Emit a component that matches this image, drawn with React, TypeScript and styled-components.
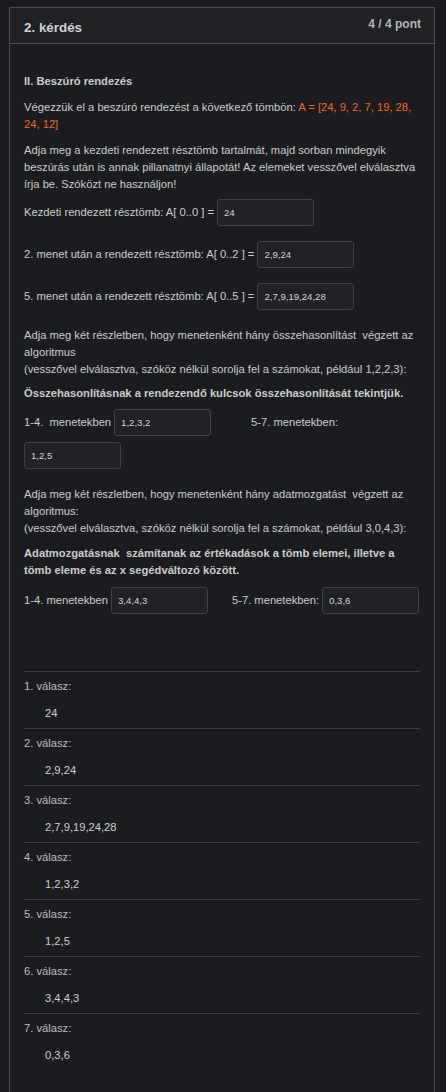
import React from "react";
import styled, { createGlobalStyle } from "styled-components";

const GlobalStyle = createGlobalStyle`
  html, body {
    margin: 0;
    padding: 0;
    background: #1a1b1e;
  }
  body {
    font-family: "Liberation Sans", Arial, sans-serif;
    color: #cccccc;
  }
`;

const Page = styled.div`
  padding: 7px 11px 10px 9px;
`;

const Card = styled.section`
  border: 1px solid #4b4c4f;
  background: #1b1c1f;
`;

const Header = styled.header`
  display: flex;
  justify-content: space-between;
  align-items: flex-start;
  background: #202124;
  border-bottom: 1px solid #4b4c4f;
  height: 36px;
  padding: 0 13px 0 14px;
  box-sizing: border-box;
`;

const Title = styled.h2`
  margin: 12px 0 0;
  font-size: 13.4px;
  line-height: 16px;
  font-weight: 700;
  color: #d2d2d2;
`;

const Points = styled.span`
  margin-top: 9px;
  font-size: 12px;
  line-height: 14px;
  font-weight: 700;
  color: #b4b4b4;
`;

const Body = styled.div`
  padding: 29px 13px 26px 14px;
  font-size: 11.2px;
  line-height: 17px;
`;

const Para = styled.p<{ $bold?: boolean; $mb?: number }>`
  margin: 0 0 ${(p) => (p.$mb ?? 9)}px;
  font-weight: ${(p) => (p.$bold ? 700 : 400)};
`;

const Accent = styled.span`
  color: #f5671c;
`;

const Row = styled.div<{ $mb?: number }>`
  display: flex;
  flex-wrap: wrap;
  align-items: center;
  row-gap: 6px;
  margin-bottom: ${(p) => (p.$mb ?? 15)}px;
`;

const Label = styled.span<{ $ml?: number }>`
  margin-left: ${(p) => (p.$ml ?? 0)}px;
  margin-right: 3px;
  white-space: pre;
`;

const Field = styled.input`
  box-sizing: border-box;
  width: 97px;
  height: 27px;
  padding: 0 6px;
  background: #212226;
  border: 1px solid #404145;
  border-radius: 3px;
  color: #d4d4d4;
  font-family: "Liberation Sans", Arial, sans-serif;
  font-size: 9.6px;
  outline: none;
`;

const Answers = styled.div`
  margin-top: 57px;
  margin-right: 1px;
`;

const Answer = styled.div`
  border-top: 1px solid #3d3e41;
  padding: 6px 0 6px;
`;

const AnswerLabel = styled.div`
  color: #bdbdbd;
  margin-bottom: 10px;
`;

const AnswerValue = styled.div`
  padding-left: 21px;
  color: #cfcfcf;
`;

const answers = ["24", "2,9,24", "2,7,9,19,24,28", "1,2,3,2", "1,2,5", "3,4,4,3", "0,3,6"];

export default function App() {
  return (
    <Page>
      <GlobalStyle />
      <Card>
        <Header>
          <Title>2. kérdés</Title>
          <Points>4 / 4 pont</Points>
        </Header>
        <Body>
          <Para $bold>II. Beszúró rendezés</Para>
          <Para>
            Végezzük el a beszúró rendezést a következő tömbön:{" "}
            <Accent>A = [24, 9, 2, 7, 19, 28, 24, 12]</Accent>
          </Para>
          <Para $mb={6}>
            Adja meg a kezdeti rendezett résztömb tartalmát, majd sorban mindegyik beszúrás után is
            annak pillanatnyi állapotát! Az elemeket vesszővel elválasztva írja be. Szóközt ne
            használjon!
          </Para>
          <Row>
            <Label>Kezdeti rendezett résztömb: A[ 0..0 ] =</Label>
            <Field readOnly value="24" />
          </Row>
          <Row>
            <Label>2. menet után a rendezett résztömb: A[ 0..2 ] =</Label>
            <Field readOnly value="2,9,24" />
          </Row>
          <Row $mb={17}>
            <Label>5. menet után a rendezett résztömb: A[ 0..5 ] =</Label>
            <Field readOnly value="2,7,9,19,24,28" />
          </Row>
          <Para $mb={7}>
            Adja meg két részletben, hogy menetenként hány összehasonlítást&nbsp; végzett az
            algoritmus
            <br />
            (vesszővel elválasztva, szóköz nélkül sorolja fel a számokat, például 1,2,2,3):
          </Para>
          <Para $bold $mb={7}>
            Összehasonlításnak a rendezendő kulcsok összehasonlítását tekintjük.
          </Para>
          <Row $mb={17}>
            <Label>1-4.  menetekben</Label>
            <Field readOnly value="1,2,3,2" />
            <Label $ml={40}>5-7. menetekben:</Label>
            <Field readOnly value="1,2,5" />
          </Row>
          <Para $mb={8}>
            Adja meg két részletben, hogy menetenként hány adatmozgatást&nbsp; végzett az
            algoritmus:
            <br />
            (vesszővel elválasztva, szóköz nélkül sorolja fel a számokat, például 3,0,4,3):
          </Para>
          <Para $bold $mb={8}>
            Adatmozgatásnak&nbsp; számítanak az értékadások a tömb elemei, illetve a tömb eleme és
            az x segédváltozó között.
          </Para>
          <Row $mb={0}>
            <Label>1-4. menetekben</Label>
            <Field readOnly value="3,4,4,3" />
            <Label $ml={24}>5-7. menetekben:</Label>
            <Field readOnly value="0,3,6" />
          </Row>
          <Answers>
            {answers.map((a, i) => (
              <Answer key={i}>
                <AnswerLabel>{i + 1}. válasz:</AnswerLabel>
                <AnswerValue>{a}</AnswerValue>
              </Answer>
            ))}
          </Answers>
        </Body>
      </Card>
    </Page>
  );
}
